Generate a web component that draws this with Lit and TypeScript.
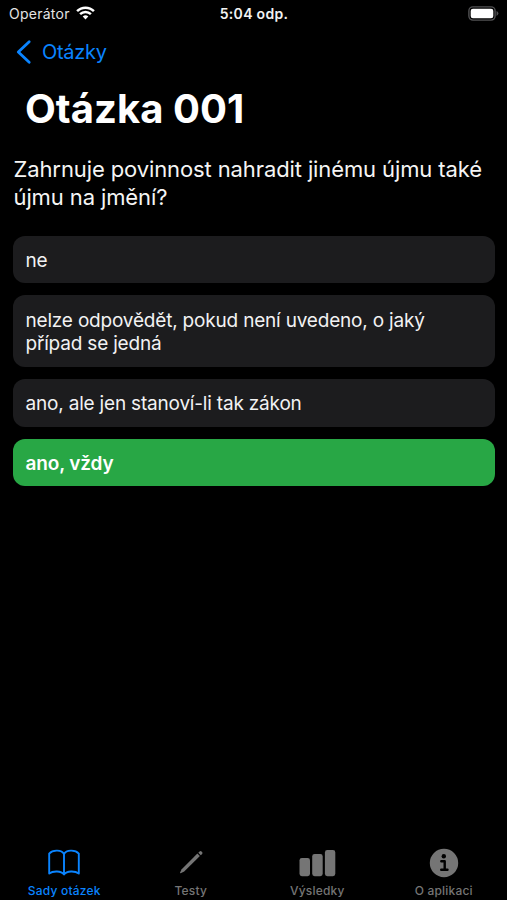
import { LitElement, html, css, svg } from "lit";
import { customElement, property } from "lit/decorators.js";
import { classMap } from "lit/directives/class-map.js";

const wifi = svg`<svg class="wifi" width="19" height="14" viewBox="0 0 19 14" fill="none" stroke="#fff" stroke-width="2.5">
  <path d="M1.1 5.1a11.9 11.9 0 0 1 16.8 0"/><path d="M4.1 8.2a7.7 7.7 0 0 1 10.8 0"/>
  <path d="M9.5 13.4 6.7 10.6a4 4 0 0 1 5.6 0Z" fill="#fff" stroke="none"/></svg>`;

const battery = svg`<svg class="battery" width="31" height="15" viewBox="0 0 31 15">
  <rect x=".9" y=".9" width="26.2" height="13.2" rx="4" fill="none" stroke="#515153" stroke-width="1.4"/>
  <rect x="2.7" y="2.7" width="22.6" height="9.6" rx="2.2" fill="#fff"/>
  <path d="M28.5 5.1q1.9.9 1.9 2.4t-1.9 2.4Z" fill="#515153"/></svg>`;

const icons: Record<string, unknown> = {
  book: svg`<svg width="34" height="30" viewBox="0 0 34 30" fill="none" stroke="currentColor" stroke-width="1.9" stroke-linejoin="round">
    <path d="M17 6C14.8 1.9 6 1.2 2.2 5.6V25.6C6 22.6 14.200 22.700 17 26.400C19.800 22.700 28 22.600 31.800 25.600V5.600C28 1.200 19.200 1.900 17 6ZV26.400"/></svg>`,
  pencil: svg`<svg width="34" height="30" viewBox="0 0 34 30" fill="currentColor">
    <path d="M23.4 5.6 25.9 8.1 10.200 23.600 6.600 25.200Q5.800 25.300 6.100 24.500L7.700 21.200Z"/><path d="M24.300 4.700 25.600 3.400q1-.8 1.900.1l.6.600q.9.900 0 1.900L26.800 7.200Z"/></svg>`,
  bars: svg`<svg width="38" height="30" viewBox="0 0 38 30" fill="currentColor">
    <rect x="1.5" y="10" width="10.5" height="18.2" rx="2.4"/><rect x="14.2" y="6.100" width="10.500" height="22.100" rx="2.400"/><rect x="26.900" y="2" width="10.400" height="26.200" rx="2.400"/></svg>`,
  info: svg`<svg width="30" height="30" viewBox="0 0 30 30"><circle cx="15" cy="15" r="14.2" fill="currentColor"/>
    <circle cx="14.8" cy="8.2" r="2.2" fill="#000"/><path d="M12.300 13.200H15.700V21.600M12.200 21.700H18.500" fill="none" stroke="#000" stroke-width="2.400" stroke-linecap="round" stroke-linejoin="round"/></svg>`,
};

@customElement("status-bar")
class StatusBar extends LitElement {
  static styles = css`
    :host { display: grid; grid-template-columns: 1fr auto 1fr; align-items: center; height: 28px; padding: 0 8px 0 9px; font-size: 14px; line-height: 28px; }
    .carrier { display: flex; align-items: center; gap: 6px; color: #e4e4e4; letter-spacing: 0.25px; }
    .time { font-weight: 600; letter-spacing: 0.3px; color: #f2f2f2; }
    .wifi { margin-top: -3px; }
    .battery { justify-self: end; margin-top: -2px; }
  `;
  render() {
    return html`<div class="carrier"><span>Operátor</span>${wifi}</div><span class="time">5:04 odp.</span>${battery}`;
  }
}

@customElement("answer-option")
class AnswerOption extends LitElement {
  @property() label = "";
  @property({ type: Boolean }) correct = false;
  static styles = css`
    :host { display: block; }
    .card { box-sizing: border-box; padding: 13.2px 12.5px 11.3px; border-radius: 12px; background: #1c1c1e; color: #f2f2f3; font-size: 19px; line-height: 23.3px; letter-spacing: -0.19px; }
    .correct { background: #28a745; color: #fff; font-weight: 600; letter-spacing: -0.15px; }
  `;
  render() {
    return html`<div class=${classMap({ card: true, correct: this.correct })}>${this.label}</div>`;
  }
}

@customElement("tab-item")
class TabItem extends LitElement {
  @property() icon = "";
  @property() label = "";
  @property({ type: Boolean }) active = false;
  static styles = css`
    :host { flex: 1; min-width: 0; }
    .tab { display: flex; flex-direction: column; align-items: center; color: #757575; font-size: 12px; font-weight: 500; line-height: 16px; letter-spacing: 0.2px; gap: 5px; }
    .active { color: #0a84ff; }
    svg { display: block; }
  `;
  render() {
    return html`<div class=${classMap({ tab: true, active: this.active })}>${icons[this.icon]}<span>${this.label}</span></div>`;
  }
}

@customElement("app-root")
class AppRoot extends LitElement {
  static styles = css`
    :host { display: flex; flex-direction: column; box-sizing: border-box; height: 900px; overflow: hidden; background: #000; color: #fff; font-family: Inter, "Liberation Sans", sans-serif; }
    .back { display: flex; align-items: center; height: 48px; padding-left: 16px; gap: 10px; color: #0a84ff; font-size: 20px; letter-spacing: -0.3px; }
    .title { margin: 9px 0 0 25px; font-size: 40px; line-height: 48px; font-weight: 700; letter-spacing: 0.05px; }
    .question { margin: 22px 12px 0 13.5px; font-size: 22px; line-height: 28px; letter-spacing: -0.11px; color: #f5f5f5; }
    .answers { display: flex; flex-direction: column; gap: 12.2px; margin: 24.5px 12.5px 0 13px; }
    .tabs { display: flex; height: 52px; margin-top: auto; padding-left: 1px; }
  `;
  render() {
    return html`
      <status-bar></status-bar>
      <nav class="back">
        <svg width="16" height="26" viewBox="0 0 16 26" fill="none" stroke="currentColor" stroke-width="2.8" stroke-linecap="round" stroke-linejoin="round"><path d="M13.2 2.7 2.3 13 13.2 23.3"/></svg>
        <span>Otázky</span>
      </nav>
      <h1 class="title">Otázka 001</h1>
      <div class="question">Zahrnuje povinnost nahradit jinému újmu také<br />újmu na jmění?</div>
      <div class="answers">
        <answer-option label="ne"></answer-option>
        <answer-option label="nelze odpovědět, pokud není uvedeno, o jaký případ se jedná"></answer-option>
        <answer-option label="ano, ale jen stanoví-li tak zákon"></answer-option>
        <answer-option label="ano, vždy" correct></answer-option>
      </div>
      <div class="tabs">
        <tab-item icon="book" label="Sady otázek" active></tab-item>
        <tab-item icon="pencil" label="Testy"></tab-item>
        <tab-item icon="bars" label="Výsledky"></tab-item>
        <tab-item icon="info" label="O aplikaci"></tab-item>
      </div>`;
  }
}
